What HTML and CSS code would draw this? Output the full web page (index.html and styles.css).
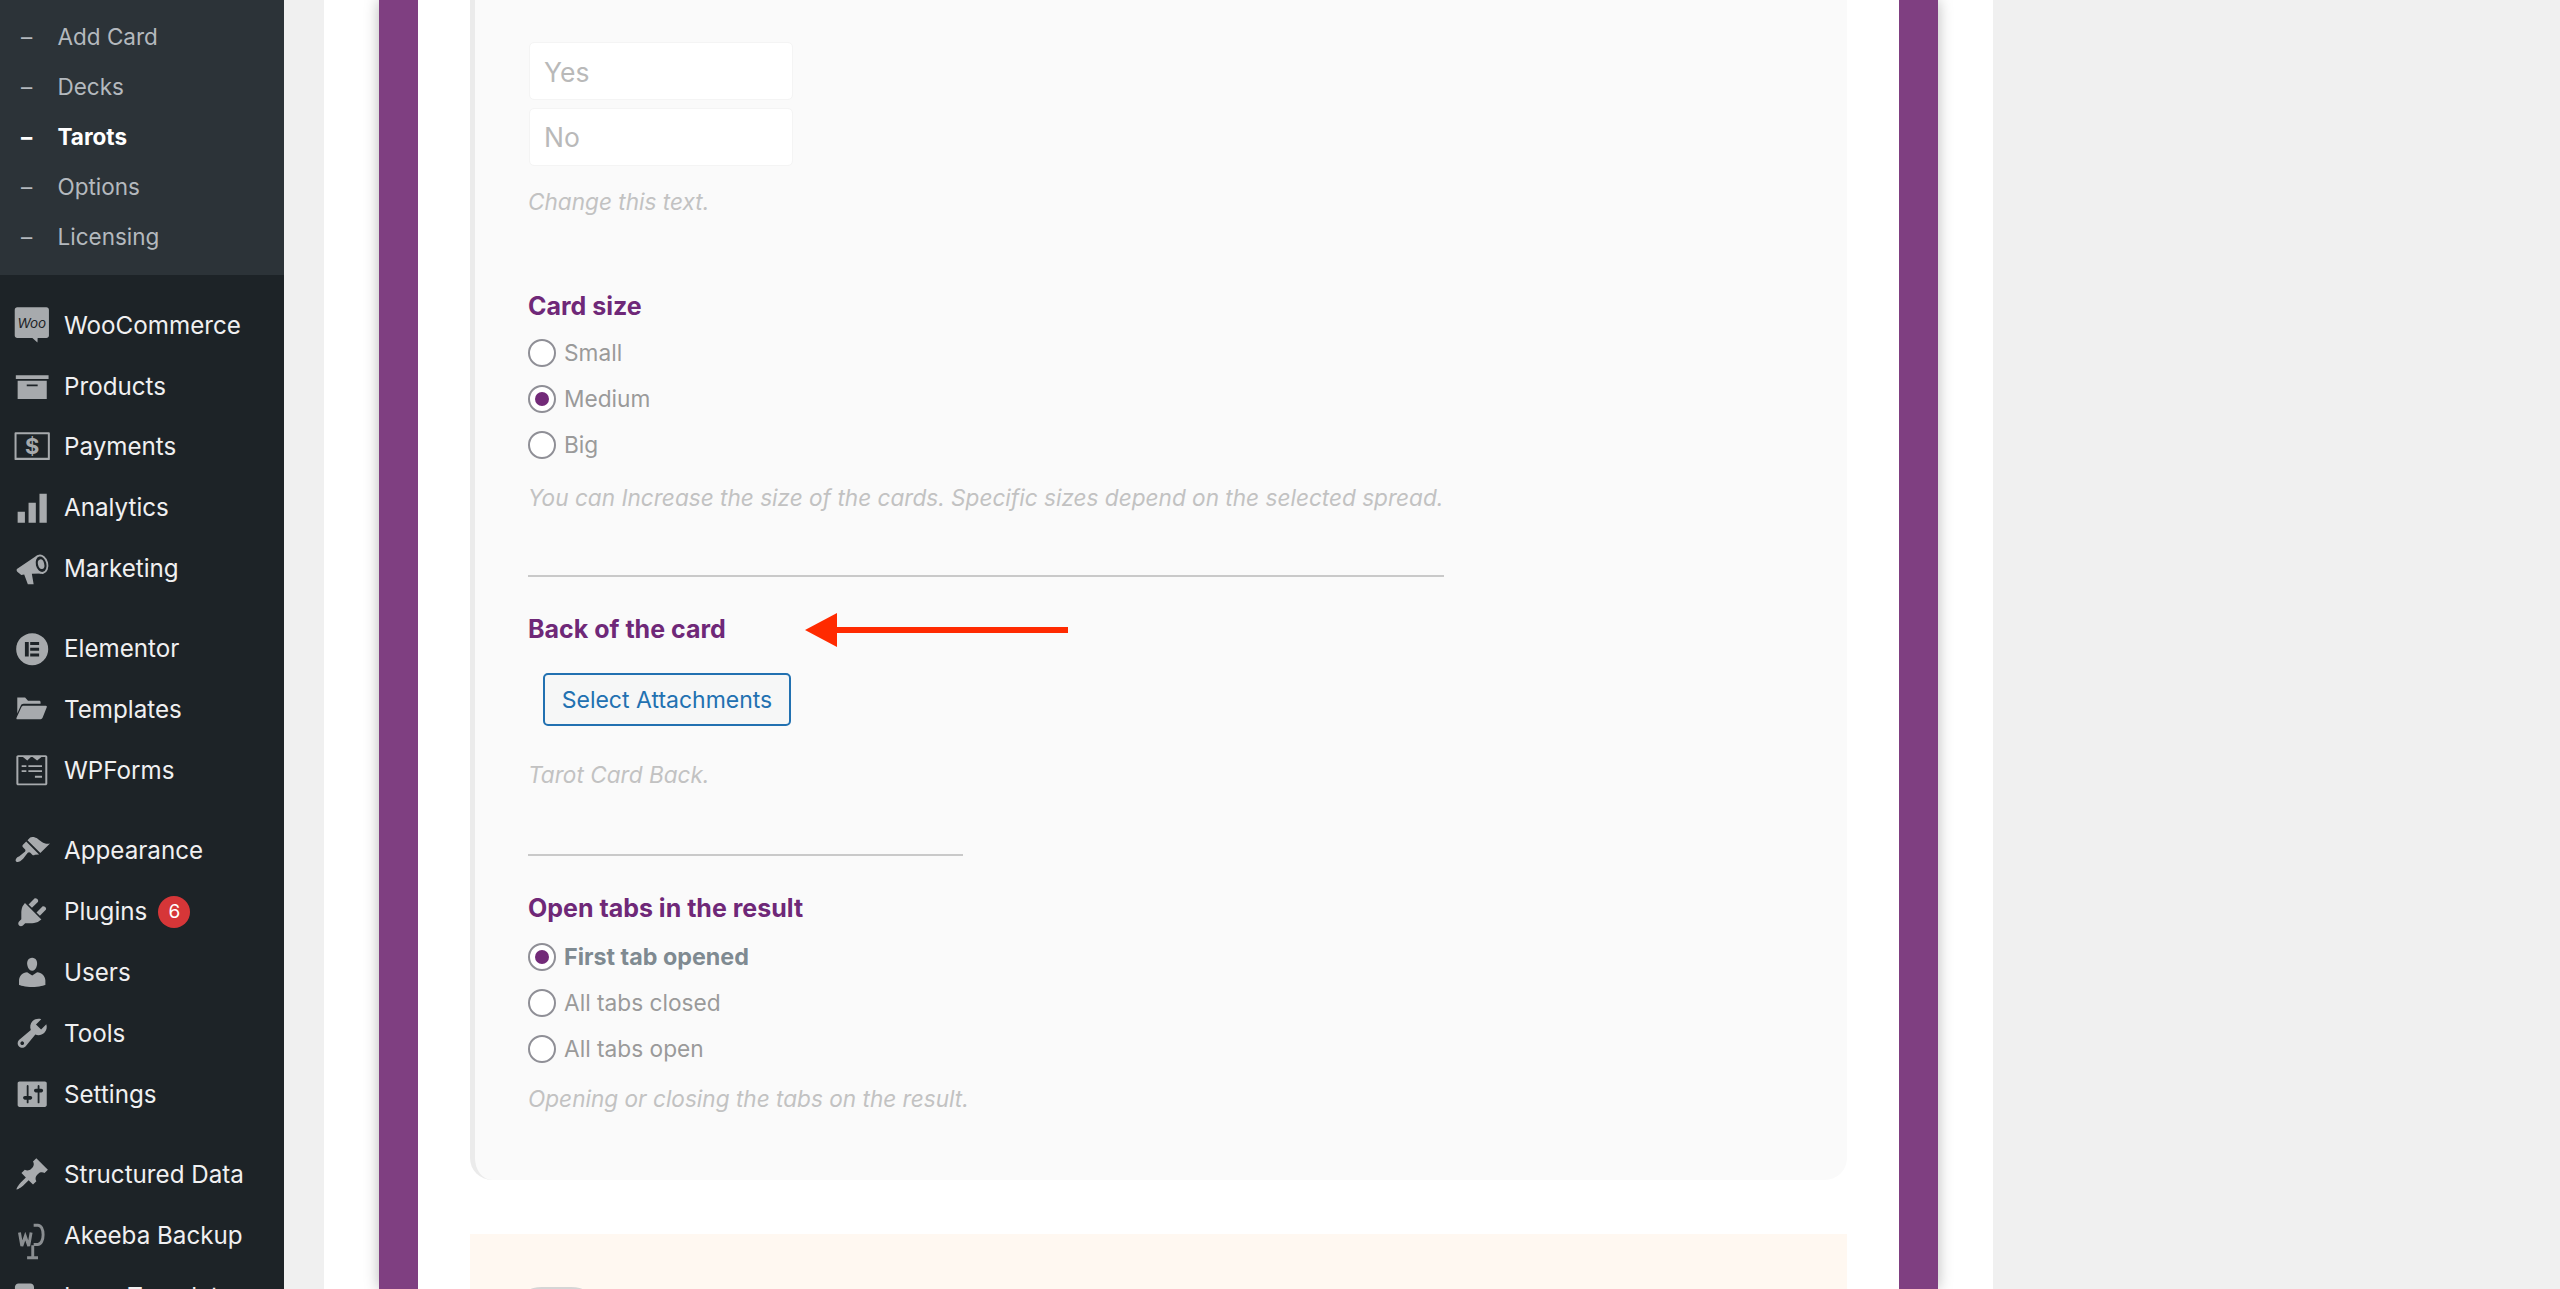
FILE: index.html
```html
<!DOCTYPE html>
<html lang="en">
<head>
<meta charset="utf-8">
<title>Tarots</title>
<link rel="stylesheet" href="styles.css">
</head>
<body>
<div class="page">
  <aside class="sidebar">
    <ul class="submenu">
      <li><span class="dash">–</span>Add Card</li>
      <li><span class="dash">–</span>Decks</li>
      <li class="current"><span class="dash">–</span>Tarots</li>
      <li><span class="dash">–</span>Options</li>
      <li><span class="dash">–</span>Licensing</li>
    </ul>
    <ul class="menu">
      <li><svg class="icon" viewBox="0 0 20 20"><path d="M1.800.2h16c.8 0 1.400.6 1.400 1.400v14c0 .8-.6 1.400-1.400 1.400h-4.800l-.1 2.500-2.800-2.500H1.800c-.8 0-1.400-.6-1.400-1.400v-14C.4.800 1 .2 1.800.2z"/><text class="woo-text" x="9.800" y="11.400" text-anchor="middle">Woo</text></svg>WooCommerce</li>
      <li><svg class="icon" viewBox="0 0 20 20"><path d="M19 4v2H1V4h18zM2 7h16v10H2V7zm11 3V9H7v1h6z"/></svg>Products</li>
      <li><svg class="icon" viewBox="0 0 20 20"><path fill-rule="evenodd" d="M.8 1.800h18.400c.3 0 .5.200.5.500v14.300c0 .3-.2.500-.5.500H.8c-.3 0-.5-.2-.5-.5V2.300c0-.3.200-.5.500-.5zm.6 1.100v12.900h17.200V2.900z"/><text class="pay-text" x="10" y="13.800" text-anchor="middle">$</text></svg>Payments</li>
      <li><svg class="icon" viewBox="0 0 20 20"><path d="M18 18V2h-4v16h4zm-6 0V7H8v11h4zm-6 0v-6H2v6h4z"/></svg>Analytics</li>
      <li><svg class="icon" viewBox="0 0 20 20"><path d="M1.600 10.400 13 2.700l2 10.200-5.200.2 1 5.700H7.600L5.600 13.400l-1.600.3-2.200-1.800c-.4-.4-.5-1.100-.2-1.500z"/><ellipse cx="14.900" cy="7.800" rx="3.900" ry="5.400" transform="rotate(-14 14.900 7.800)"/><ellipse class="cut" cx="14.900" cy="7.800" rx="2.900" ry="4.300" transform="rotate(-14 14.900 7.800)"/><ellipse cx="14.900" cy="7.800" rx="1.700" ry="2.700" transform="rotate(-14 14.900 7.800)"/></svg>Marketing</li>
      <li class="sep"></li>
      <li><svg class="icon" viewBox="0 0 20 20"><path fill-rule="evenodd" d="M10 1.200a8.800 8.800 0 1 1 0 17.600 8.800 8.800 0 0 1 0-17.600zM6 6v8h2.100V6zm2.900 0v1.700h4.900V6zm0 3.150v1.700h4.900v-1.700zm0 3.150V14h4.900v-1.700z"/></svg>Elementor</li>
      <li><svg class="icon" viewBox="0 0 20 20"><path d="M1.800 3h4.300l1.600 1.800h6.100c.5 0 .8.300.8.800v.9H5.300c-.8 0-1.300.4-1.600 1L1.800 11.800zM5.200 7.500h12.300c.5 0 .7.400.5.900l-2.300 5.800c-.2.500-.6.800-1 .8H1.900c-.5 0-.7-.4-.5-.9l2.700-5.800c.2-.5.600-.8 1.100-.8z"/></svg>Templates</li>
      <li><svg class="icon" viewBox="0 0 20 20"><path fill-rule="evenodd" d="M2.300 1.800h15c.6 0 1 .4 1 1v14.500c0 .6-.4 1-1 1h-15c-.6 0-1-.4-1-1V2.800c0-.6.400-1 1-1zm.1 1v14.500h14.800V2.800h-2.100l-2.400 1.900-2.500-1.900h-.9L7.300 4.700 4.900 2.800zM4.200 7.300h2.600v1H4.200zm3.700 0h7.500v1H7.900zM4.200 10h2.600v1H4.200zm3.700 0h7.500v1H7.900zm3.600 3.100h3.900v1.100h-3.900z"/></svg>WPForms</li>
      <li class="sep"></li>
      <li><svg class="icon" viewBox="0 0 20 20"><path d="M14.480 11.060L7.410 3.990l1.500-1.500c.5-.56 2.300-.47 3.510.32 1.210.8 1.430 1.280 2.910 2.100 1.180.64 2.450 1.260 4.450.85zm-.71.71L6.700 4.700 4.930 6.470c-.39.39-.39 1.020 0 1.410l1.060 1.060c.39.39.39 1.030 0 1.420-.6.6-1.430 1.110-2.210 1.690-.35.26-.7.530-1.010.84C1.430 13.230.4 14.910 1.200 15.700c.79.8 2.470-.23 3.820-1.570.31-.31.580-.66.850-1.020.57-.78 1.080-1.600 1.690-2.210.39-.39 1.020-.39 1.410 0l1.060 1.060c.39.39 1.020.39 1.410 0z"/></svg>Appearance</li>
      <li><svg class="icon" viewBox="0 0 20 20"><path d="M13.110 4.360L9.870 7.600 8 5.730l3.240-3.240c.35-.34 1.050-.2 1.560.32.520.51.660 1.210.310 1.550zm-8 1.770l.91-1.120 9.010 9.010-1.190.84c-.71.71-2.630 1.160-3.820 1.160H6.140L4.900 17.260c-.59.59-1.540.59-2.120 0-.59-.58-.59-1.530 0-2.120l1.240-1.240v-3.880c0-1.130.4-3.190 1.090-3.890zm7.260 3.970l3.240-3.240c.34-.35 1.040-.21 1.550.31.520.51.660 1.210.310 1.550l-3.240 3.250z"/></svg>Plugins<span class="badge">6</span></li>
      <li><svg class="icon" viewBox="0 0 20 20"><path d="M10 9.250c-2.270 0-2.730-3.440-2.730-3.440C7 4.020 7.820 2 9.970 2c2.160 0 2.980 2.020 2.710 3.810 0 0-.41 3.440-2.680 3.440zm0 2.570L12.720 10c2.390 0 4.520 2.330 4.520 4.530v2.490s-3.650 1.130-7.240 1.130c-3.650 0-7.240-1.130-7.240-1.130v-2.490c0-2.250 1.940-4.480 4.470-4.480z"/></svg>Users</li>
      <li><svg class="icon" viewBox="0 0 20 20"><path d="M16.680 9.770c-1.340 1.340-3.300 1.670-4.950.99l-5.410 6.520c-.99.99-2.590.99-3.580 0s-.99-2.590 0-3.570l6.520-5.420c-.68-1.650-.35-3.610.99-4.950 1.280-1.280 3.120-1.620 4.720-1.060l-2.890 2.890 2.820 2.820 2.860-2.870c.53 1.580.18 3.390-1.080 4.650zM3.810 16.210c.4.39 1.040.39 1.430 0 .4-.4.4-1.040 0-1.430-.39-.4-1.030-.4-1.430 0-.39.39-.39 1.030 0 1.430z"/></svg>Tools</li>
      <li><svg class="icon" viewBox="0 0 20 20"><path d="M18 16V4c0-.55-.45-1-1-1H3c-.55 0-1 .45-1 1v12c0 .55.45 1 1 1h14c.55 0 1-.45 1-1zM8 11h1c.55 0 1 .45 1 1s-.45 1-1 1H8v1.500c0 .28-.22.5-.5.5s-.5-.22-.5-.5V13H6c-.55 0-1-.45-1-1s.45-1 1-1h1V5.500c0-.28.22-.5.5-.5s.5.220.5.5V11zm5-2h-1c-.55 0-1-.45-1-1s.45-1 1-1h1V5.500c0-.28.22-.5.5-.5s.5.220.5.5V7h1c.55 0 1 .45 1 1s-.45 1-1 1h-1v5.500c0 .28-.22.5-.5.5s-.5-.22-.5-.5V9z"/></svg>Settings</li>
      <li class="sep"></li>
      <li><svg class="icon" viewBox="0 0 20 20"><path d="M10.440 3.020l1.820-1.820 6.360 6.350-1.830 1.820c-1.050-.68-2.480-.57-3.410.36l-.75.75c-.92.93-1.040 2.350-.35 3.410l-1.830 1.820-2.410-2.410-2.800 2.790c-.42.42-3.380 2.710-3.800 2.290s1.860-3.390 2.280-3.810l2.790-2.790L4.100 9.360l1.830-1.820c1.050.69 2.480.57 3.400-.36l.75-.75c.93-.92 1.050-2.350.36-3.410z"/></svg>Structured Data</li>
      <li><svg class="icon" viewBox="0 0 20 20"><path class="ak" d="M3 8.500l1.300 7.500 1.900-5.500 1.900 5.500 1.300-7.500M10.800 4.500h2.300c1.800 0 2.900 2.300 2.900 5.200s-1.100 5.400-3 5.400h-2.200M10.300 15.500v6.700M7.200 22.400h6"/></svg>Akeeba Backup</li>
      <li><svg class="icon" viewBox="0 0 20 20"><path d="M2.500 3h6.500c1.100 0 2 .9 2 2v15H.5V5c0-1.100.9-2 2-2z"/></svg>Loco Translate</li>
    </ul>
  </aside>
  <main class="main">
    <section class="panel">
      <div class="frame">
        <div class="inner">
          <div class="card">
            <div class="field-input">Yes</div>
            <div class="field-input second">No</div>
            <p class="hint first-hint">Change this text.</p>

            <h3 class="label label-size">Card size</h3>
            <div class="radios radios-size">
              <div class="radio"><span class="dot"></span>Small</div>
              <div class="radio"><span class="dot on"></span>Medium</div>
              <div class="radio"><span class="dot"></span>Big</div>
            </div>
            <p class="hint hint-size">You can Increase the size of the cards. Specific sizes depend on the selected spread.</p>
            <hr class="rule rule-wide">

            <h3 class="label label-back">Back of the card
              <svg class="arrow" viewBox="0 0 263 34" width="263" height="34"><path d="M0 17 32 0v14h231v6H32v14z"/></svg>
            </h3>
            <button class="attach" type="button">Select Attachments</button>
            <p class="hint hint-back">Tarot Card Back.</p>
            <hr class="rule rule-short">

            <h3 class="label label-tabs">Open tabs in the result</h3>
            <div class="radios radios-tabs">
              <div class="radio strong"><span class="dot on"></span>First tab opened</div>
              <div class="radio"><span class="dot"></span>All tabs closed</div>
              <div class="radio"><span class="dot"></span>All tabs open</div>
            </div>
            <p class="hint hint-tabs">Opening or closing the tabs on the result.</p>
          </div>
          <div class="notice"><div class="toggle"></div></div>
        </div>
      </div>
    </section>
  </main>
</div>
</body>
</html>
```

FILE: styles.css
```css
* { box-sizing: border-box; }
html, body { margin: 0; height: 1289px; overflow: hidden; background: #f0f0f0; }
body { font-family: Inter, "Liberation Sans", sans-serif; }
ul { list-style: none; margin: 0; padding: 0; }

.page { display: flex; height: 1289px; overflow: hidden; }

.sidebar { width: 284px; flex: none; background: #1d2327; color: #f0f0f1; overflow: hidden; }
.submenu { background: #2c3338; padding: 11px 0 13px; color: #b4b9be; font-size: 22.5px; }
.submenu li { height: 50.2px; display: flex; align-items: center; padding-left: 21px; }
.dash { width: 36.5px; flex: none; }
.submenu .current { color: #fff; font-weight: 700; }

.menu { padding-top: 20px; font-size: 24.2px; }
.menu li { height: 60.8px; display: flex; align-items: center; padding-left: 14px; }
.menu li.sep { height: 19.6px; }
.icon { width: 36.400px; height: 36.400px; flex: none; margin-right: 13.600px; fill: #a7aaad; overflow: visible; }
.icon .cut { fill: #1d2327; }
.icon .ak { fill: none; stroke: #8a8e91; stroke-width: 1.600; }
.woo-text { font: italic 400 7.4px Inter, sans-serif; fill: #1d2327; }
.pay-text { font: 700 12px Inter, sans-serif; fill: #a7aaad; }
.badge { width: 32px; height: 32px; border-radius: 50%; background: #d63638; color: #fff; font-size: 19px; display: flex; align-items: center; justify-content: center; margin-left: 11px; }

.main { flex: 1; min-width: 0; padding-left: 40px; }
.panel { width: 1669px; height: 1289px; background: #fff; padding-left: 55px; }
.frame { width: 1559px; height: 1289px; background: #7f3f81; padding: 0 39px; box-shadow: 0 0 14px rgba(0, 0, 0, .28); }
.inner { height: 1289px; background: #fff; padding: 0 52px; }

.card { background: #fafafa; border-left: 5px solid #ebebeb; border-radius: 0 0 22px 22px; padding: 42px 0 67px 53px; height: 1180px; }
.field-input { width: 264px; height: 58px; margin-left: 1px; padding: 0 14px; background: #fff; border: 1px solid #f4f4f4; border-radius: 5px; color: #b9b9b9; font-size: 26.5px; line-height: 58px; }
.field-input.second { margin-top: 8px; line-height: 56px; }

.hint { margin: 0; font-size: 22.6px; line-height: 30px; font-style: italic; color: #c2c2c2; }
.first-hint { margin-top: 21px; }
.hint-size { margin-top: 15px; }
.hint-back { margin-top: 34px; }
.hint-tabs { margin-top: 12px; }

.label { position: relative; margin: 0; padding-bottom: 2px; font-size: 25px; line-height: 28px; font-weight: 700; color: #6f2878; }
.label-size { margin-top: 75px; }
.label-back { margin-top: 38px; }
.label-tabs { margin-top: 38px; }
.arrow { position: absolute; left: 277px; top: -2px; fill: #ff2a00; }

.radios-size { margin-top: 8px; }
.radios-tabs { margin-top: 10px; }
.radio { height: 46px; padding-bottom: 2px; display: flex; align-items: center; gap: 8px; font-size: 22.7px; color: #9a9a9a; }
.radio.strong { font-weight: 700; font-size: 23.3px; color: #7f8a91; }
.dot { width: 28px; height: 28px; margin-bottom: -2px; border-radius: 50%; border: 2px solid #8f8f96; background: #fff; flex: none; display: flex; align-items: center; justify-content: center; }
.dot.on::after { content: ""; width: 14px; height: 14px; border-radius: 50%; background: #722a78; }

.rule { margin: 0; border: 0; height: 2px; background: #c9c9c9; }
.rule-wide { width: 916px; margin-top: 62px; }
.rule-short { width: 435px; margin-top: 64px; }

.attach { display: block; margin: 28px 0 0 15px; width: 248px; height: 53px; padding: 0; background: #f6f7f7; border: 2px solid #2271b1; border-radius: 5px; color: #2271b1; font: 400 23px Inter, sans-serif; }

.notice { margin-top: 54px; height: 200px; background: #fff8f1; padding: 53px 0 0 60px; }
.toggle { width: 53px; height: 20px; border-radius: 12px / 3px; background: #d5d5d5; }
```
